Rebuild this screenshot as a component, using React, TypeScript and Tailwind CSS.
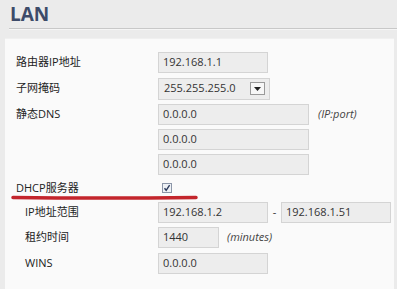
const font = "font-['Open_Sans','Noto_Sans_CJK_SC',sans-serif]"

function Field({ value, w }: { value: string; w: string }) {
  return (
    <div className={`${w} shrink-0 h-[21px] bg-[#ededed] border border-[#d4d4d4] flex items-center pl-[4px] text-[11px] text-[#333]`}>
      {value}
    </div>
  )
}

function Row({ label, h, indent, children }: { label: string; h: string; indent?: boolean; children?: React.ReactNode }) {
  return (
    <div className={`flex items-center ${h}`}>
      <div className={`w-[142px] shrink-0 text-[11px] text-[#222] ${indent ? 'pl-[9px]' : ''}`}>{label}</div>
      <div className="flex items-center shrink-0">{children}</div>
    </div>
  )
}

export default function App() {
  return (
    <div className={`relative w-[397px] h-[289px] overflow-hidden bg-[#ebebeb] flex flex-col ${font}`}>
      {/* Header */}
      <div className="h-[28px] pl-[10px] pt-[2px] text-[19px] font-bold leading-[24px] text-[#3d4b69]">LAN</div>
      <div className="ml-[9px] h-px bg-[#c8c8c8]" />
      <div className="ml-[9px] h-px bg-[#f5f5f5]" />
      <div className="h-[8px]" />

      {/* Panel */}
      <div className="ml-[5px] mr-[3px] flex-1 bg-[#fafafa] border-t border-[#f0f0f0] pl-[11px] pt-[10px]">
        <Row label="路由器IP地址" h="h-[26px]">
          <Field value="192.168.1.1" w="w-[110px]" />
        </Row>
        <Row label="子网掩码" h="h-[27px]">
          <div className="w-[112px] h-[22px] bg-[#ededed] border border-[#d4d4d4] flex items-center justify-between pl-[5px] pr-[4px] text-[11px] text-[#333]">
            <span>255.255.255.0</span>
            <span className="w-[15px] h-[13px] bg-[#f7f7f7] border border-[#9a9a9a] flex items-center justify-center">
              <svg width="7" height="4" viewBox="0 0 7 4"><path d="M0 0h7L3.5 4z" fill="#222" /></svg>
            </span>
          </div>
        </Row>
        <Row label="静态DNS" h="h-[25px]">
          <Field value="0.0.0.0" w="w-[151px]" />
          <span className="ml-[9px] text-[11px] italic text-[#444]">(IP:port)</span>
        </Row>
        <Row label="" h="h-[25px]">
          <Field value="0.0.0.0" w="w-[151px]" />
        </Row>
        <Row label="" h="h-[24px]">
          <Field value="0.0.0.0" w="w-[151px]" />
        </Row>
        <Row label="DHCP服务器" h="h-[24px]">
          <span className="ml-[4px] w-[10px] h-[10px] bg-[#eef1f5] border border-[#8c96a8] flex items-center justify-center">
            <svg width="8" height="8" viewBox="0 0 8 8"><path d="M1.5 4.2 3.2 6.3 6.6 1.2" fill="none" stroke="#2b3a5c" strokeWidth="1.4" /></svg>
          </span>
        </Row>
        <Row label="IP地址范围" h="h-[24px]" indent>
          <Field value="192.168.1.2" w="w-[110px]" />
          <span className="w-[13px] text-center text-[11px] text-[#333]">-</span>
          <Field value="192.168.1.51" w="w-[110px]" />
        </Row>
        <Row label="租约时间" h="h-[26px]" indent>
          <Field value="1440" w="w-[61px]" />
          <span className="ml-[8px] text-[11px] italic text-[#444]">(minutes)</span>
        </Row>
        <Row label="WINS" h="h-[26px]" indent>
          <Field value="0.0.0.0" w="w-[110px]" />
        </Row>
      </div>

      {/* Red annotation underline */}
      <svg className="absolute left-0 top-0" width="397" height="289">
        <path d="M13 197.5 Q100 198.5 196 197.5" stroke="#c3252c" strokeWidth="3.5" strokeLinecap="round" fill="none" />
      </svg>
    </div>
  )
}
